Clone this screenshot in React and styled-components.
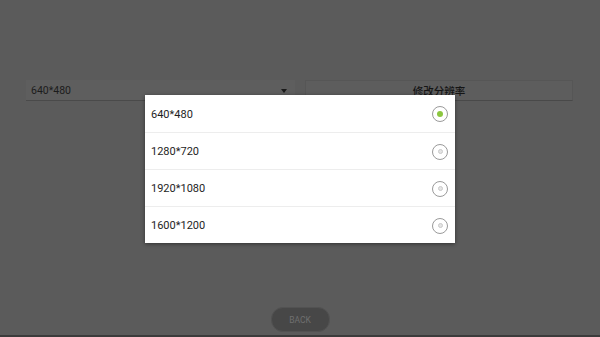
import React from "react";
import styled, { createGlobalStyle } from "styled-components";

const Global = createGlobalStyle`
  html, body { margin: 0; padding: 0; }
  body { background: #5b5b5b; font-family: Roboto, "Noto Sans", "Noto Sans CJK SC", sans-serif; }
`;

const Screen = styled.div`
  position: relative;
  width: 600px;
  height: 337px;
  background: #5b5b5b;
  display: flex;
  flex-direction: column;
  overflow: hidden;
`;

const Toolbar = styled.div`
  display: flex;
  gap: 10px;
  padding: 80px 27px 0 26px;
`;

const Spinner = styled.div`
  width: 269px;
  height: 21px;
  display: flex;
  align-items: center;
  justify-content: space-between;
  padding: 0 8px 0 5px;
  box-sizing: border-box;
  background: #5e5e5e;
  border-bottom: 1px solid #4a4a4a;
  color: #1c1c1c;
  font-size: 10.5px;
`;

const Caret = styled.span`
  width: 0;
  height: 0;
  border-left: 3.5px solid transparent;
  border-right: 3.5px solid transparent;
  border-top: 4px solid #1a1a1a;
  margin-top: 2px;
`;

const ActionButton = styled.div`
  flex: 1;
  height: 21px;
  display: flex;
  align-items: center;
  justify-content: center;
  background: #5d5d5d;
  border: 1px solid #565656;
  border-bottom: 1px solid #494949;
  box-sizing: border-box;
  color: #151515;
  font-size: 10.5px;
  font-weight: 500;
  font-family: "Noto Sans CJK SC", sans-serif;
`;

const Spacer = styled.div`
  flex: 1;
`;

const BackButton = styled.div`
  align-self: center;
  width: 59px;
  height: 25px;
  border-radius: 12px;
  background: #474747;
  border: 1px solid #525252;
  box-sizing: border-box;
  color: #6f6f6f;
  font-size: 8.5px;
  display: flex;
  align-items: center;
  justify-content: center;
  margin-bottom: 3px;
`;

const BottomBar = styled.div`
  height: 2px;
  background: #3b3b3b;
`;

const Dialog = styled.div`
  position: absolute;
  left: 145px;
  top: 95px;
  width: 310px;
  background: #ffffff;
  box-shadow: 0 1px 4px rgba(0, 0, 0, 0.45);
  display: flex;
  flex-direction: column;
`;

const Option = styled.div`
  height: 37px;
  display: flex;
  align-items: center;
  justify-content: space-between;
  padding: 1px 7px 0 6px;
  box-sizing: border-box;
  border-top: ${(p) => (p.first ? "none" : "1px solid #ededed")};
  color: #1e1e1e;
  font-size: 11px;
`;

const Radio = styled.span`
  width: 16px;
  height: 16px;
  border-radius: 50%;
  border: 1.3px solid #9a9a9a;
  box-sizing: border-box;
  display: flex;
  align-items: center;
  justify-content: center;
  &::after {
    content: "";
    width: ${(p) => (p.checked ? "6px" : "5px")};
    height: ${(p) => (p.checked ? "6px" : "5px")};
    border-radius: 50%;
    background: ${(p) => (p.checked ? "#8cc63f" : "#e4e4e4")};
    border: ${(p) => (p.checked ? "none" : "0.5px solid #c9c9c9")};
    box-sizing: border-box;
  }
`;

const options = ["640*480", "1280*720", "1920*1080", "1600*1200"];

export default function App() {
  return (
    <>
      <Global />
      <Screen>
        <Toolbar>
          <Spinner>
            <span>640*480</span>
            <Caret />
          </Spinner>
          <ActionButton>修改分辨率</ActionButton>
        </Toolbar>
        <Spacer />
        <BackButton>BACK</BackButton>
        <BottomBar />
        <Dialog>
          {options.map((o, i) => (
            <Option key={o} first={i === 0}>
              <span>{o}</span>
              <Radio checked={i === 0} />
            </Option>
          ))}
        </Dialog>
      </Screen>
    </>
  );
}
